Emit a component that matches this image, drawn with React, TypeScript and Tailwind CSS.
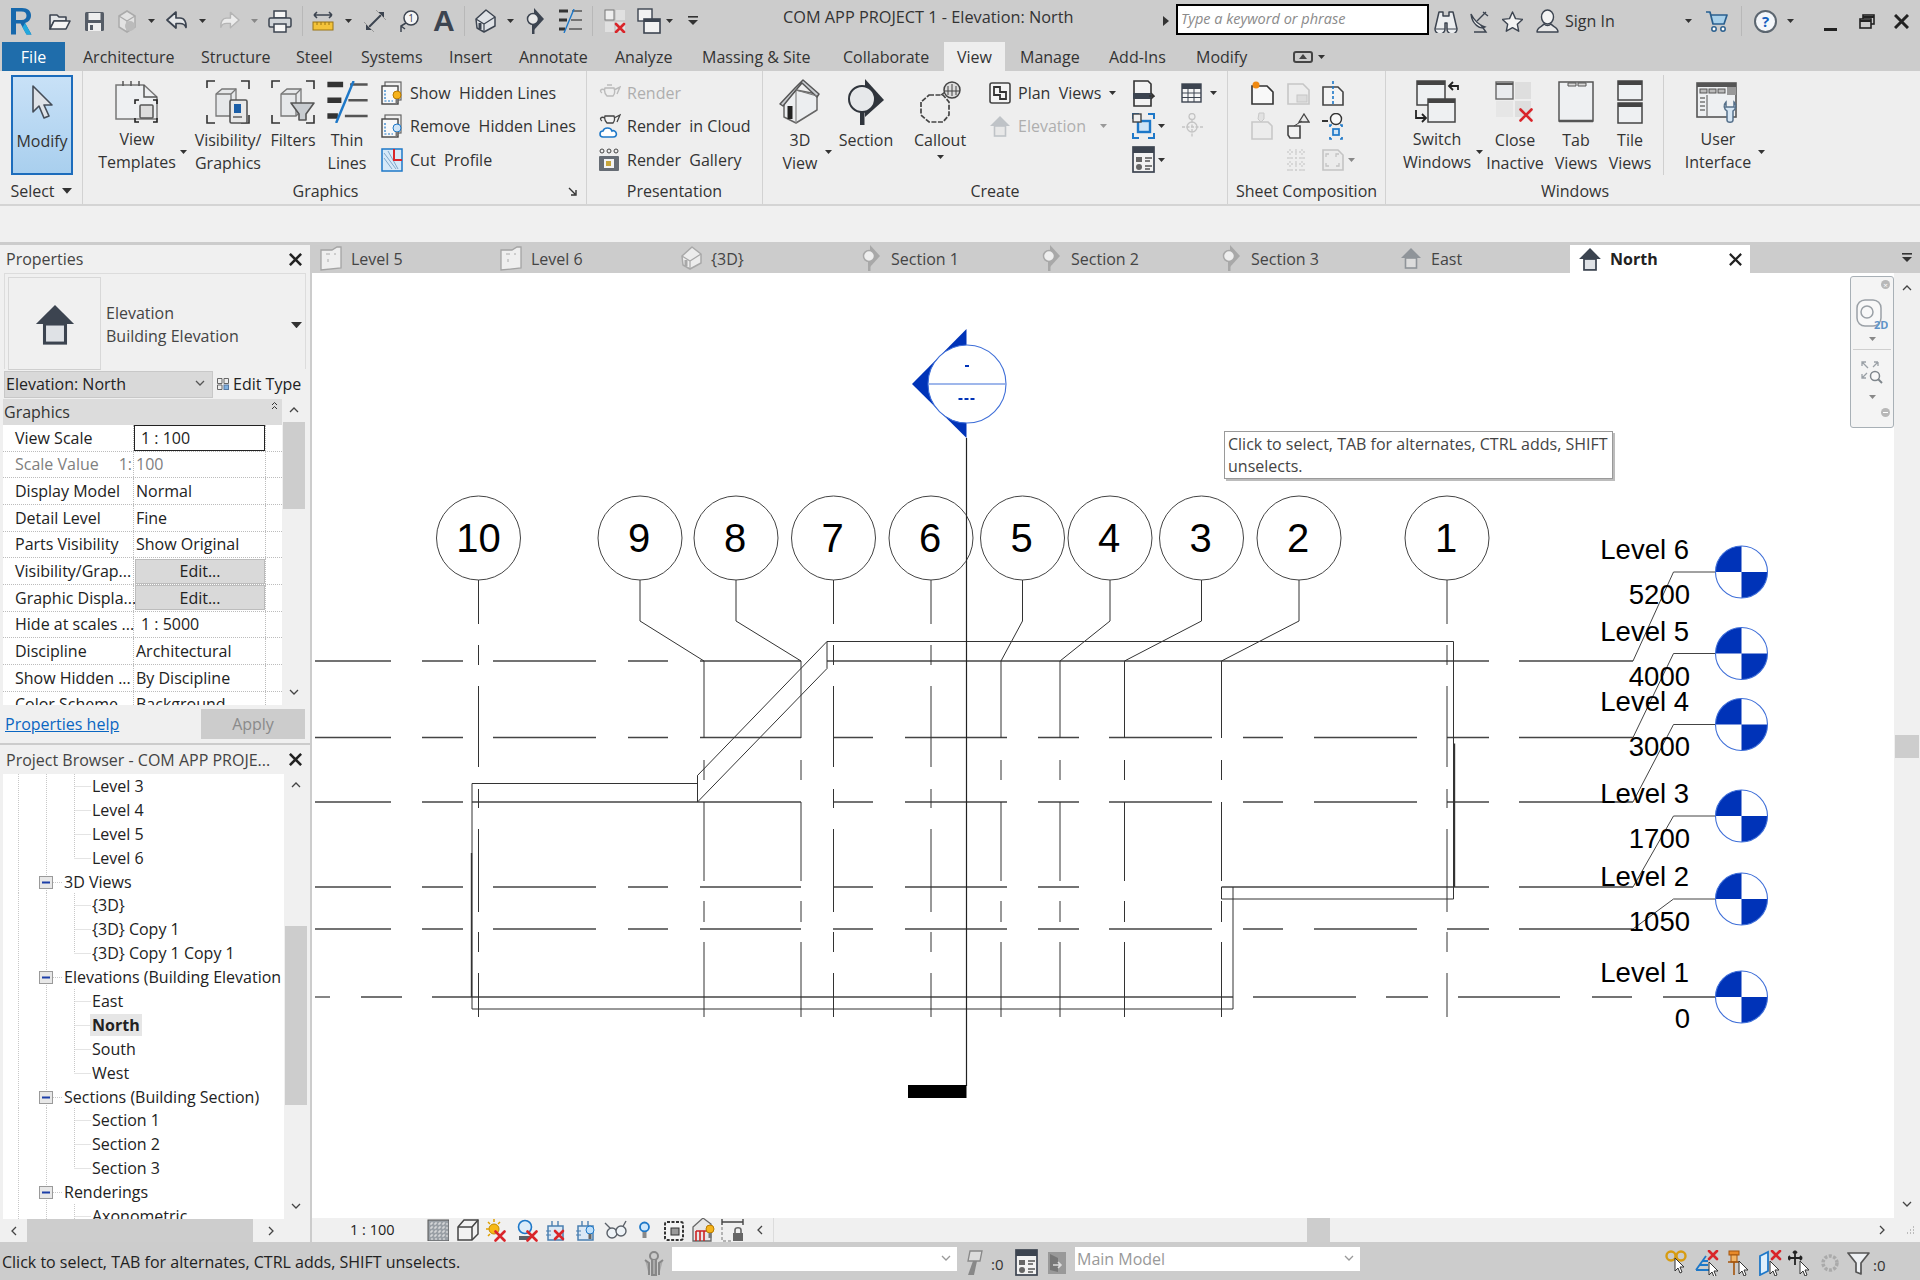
import React from "react";

type P = { children?: React.ReactNode };
const S = ({ w, h, children }: { w: number; h: number; children?: React.ReactNode }) => (
  <svg width={w} height={h} viewBox={`0 0 ${w} ${h}`} className="block shrink-0">{children}</svg>
);
const D = "#3c4450";
const G = "#e4e6e8";
const B = "#1e78c8";

const Caret = ({ c = "#333", w = 7 }: { c?: string; w?: number }) => (
  <svg width={w} height={(w * 4) / 7} viewBox="0 0 7 4" className="block shrink-0"><path d="M0 0h7L3.5 4z" fill={c} /></svg>
);
const Cross = ({ x, y, s = 5 }: { x: number; y: number; s?: number }) => (
  <path d={`M${x - s} ${y - s}L${x + s} ${y + s}M${x + s} ${y - s}L${x - s} ${y + s}`} stroke="#d9252a" strokeWidth="2.6" strokeLinecap="round" />
);

/* ---------- quick access ---------- */
const RLogo = () => (
  <S w={22} h={28}>
    <path fillRule="evenodd" d="M1 1h11c6 0 9 3 9 7.5 0 4-2.5 6.5-6 7.5l6.5 11.5h-5L10.5 16.5H6V27.5H1zM6 4.5v8.5h5.5c3.5 0 5-1.7 5-4.3S15 4.5 11.500 4.500z" fill="#1668ac" />
    <path d="M15 16l6.500 11.500h-5l-4-7z" fill="#23a8dd" />
  </S>
);
const OpenI = () => (
  <S w={23} h={20}>
    <path d="M2 4h7l2 2h7v4H6L2 18z" fill={G} stroke={D} strokeWidth="1.6" strokeLinejoin="round" />
    <path d="M6 10h16l-4 8H2z" fill="#f4f4f4" stroke={D} strokeWidth="1.6" strokeLinejoin="round" />
  </S>
);
const SaveI = () => (
  <S w={21} h={21}>
    <rect x="1" y="1" width="19" height="19" rx="1.5" fill="#555c66" />
    <rect x="4.5" y="2" width="12" height="7" fill="#eee" />
    <rect x="4" y="12" width="13" height="8" fill="#eee" />
    <rect x="6" y="14" width="3" height="5" fill="#555c66" />
  </S>
);
const SyncI = () => (
  <S w={25} h={24}>
    <path d="M4 7l8-5 8 5v11l-8 5-8-5z" fill="#e2e2e2" stroke="#aaa" strokeWidth="1.5" />
    <path d="M4 7l8 5 8-5M12 12v11" fill="none" stroke="#aaa" strokeWidth="1.2" />
    <circle cx="15" cy="17" r="5" fill="#bbb" />
  </S>
);
const UndoI = ({ c = D, f = G }: { c?: string; f?: string }) => (
  <S w={23} h={22}>
    <path d="M10 2L1 10l9 8v-4.5h4c3 0 5 1 6 4 .5-5-1.5-9.500-6-9.500h-4z" fill={f} stroke={c} strokeWidth="1.7" strokeLinejoin="round" />
  </S>
);
const RedoI = () => (
  <svg width="22" height="22" viewBox="0 0 23 22" className="block shrink-0 -scale-x-100">
    <path d="M10 2L1 10l9 8v-4.5h4c3 0 5 1 6 4 .5-5-1.5-9.500-6-9.500h-4z" fill="#ececec" stroke="#b5b5b5" strokeWidth="1.5" strokeLinejoin="round" />
  </svg>
);
const PrintI = () => (
  <S w={24} h={23}>
    <rect x="6" y="1" width="12" height="7" fill="#f6f6f6" stroke={D} strokeWidth="1.5" />
    <rect x="1" y="8" width="22" height="9" rx="1.5" fill="#d0d4d8" stroke={D} strokeWidth="1.5" />
    <rect x="6" y="14" width="12" height="8" fill="#f6f6f6" stroke={D} strokeWidth="1.5" />
  </S>
);
const Vsep = () => <div className="w-px h-[30px] bg-[#b8b8b8] shrink-0" />;
const MeasureI = () => (
  <S w={22} h={22}>
    <path d="M2 5h18M2 5l3-3M2 5l3 3M20 5l-3-3M20 5l-3 3" fill="none" stroke={D} strokeWidth="1.6" />
    <rect x="1" y="12" width="20" height="8" fill="#f3c33a" stroke="#9a7414" strokeWidth="1" />
    <path d="M5 12v3M9 12v3M13 12v3M17 12v3" stroke="#9a7414" />
  </S>
);
const AlignI = () => (
  <S w={24} h={24}>
    <path d="M5 19L19 5" stroke={D} strokeWidth="2" />
    <path d="M15 3l6 0 0 6zM3 15v6h6z" fill={D} />
    <path d="M1 13l10 10M13 1l10 10" stroke="#999" strokeWidth="1" />
  </S>
);
const TagI = () => (
  <S w={20} h={24}>
    <circle cx="12" cy="9" r="7" fill="#f5f5f5" stroke={D} strokeWidth="1.5" />
    <text x="12" y="13" textAnchor="middle" fontSize="10" fill={D}>1</text>
    <path d="M7 14L2 17v6M2 17l4 3" fill="none" stroke={D} strokeWidth="1.5" />
  </S>
);
const AI = () => (
  <div className="w-[18px] text-[30px] leading-none font-bold text-[#3c4450] font-['Liberation_Sans',sans-serif]">A</div>
);
const HouseSm = ({ c = D, f = "#dfe2e6" }: { c?: string; f?: string }) => (
  <S w={22} h={24}>
    <path d="M2 10L12 1l9 7v9l-11 6-7-4z" fill={f} stroke={c} strokeWidth="1.5" strokeLinejoin="round" />
    <path d="M2 10l8 5 11-7M10 15v8" fill="none" stroke={c} strokeWidth="1.2" />
    <rect x="4.500" y="14" width="3" height="6" fill={c} />
  </S>
);
const SecSm = ({ c = D, l = "#e8e8e8" }: { c?: string; l?: string }) => (
  <S w={19} h={26}>
    <path d="M8 0l10 11-10 11z" fill={c} />
    <circle cx="7" cy="11" r="5.500" fill={l} stroke={c} strokeWidth="1.5" />
    <rect x="6" y="17" width="2.5" height="9" fill={c} />
  </S>
);
const ThinSm = ({ w = 23, h = 24 }: { w?: number; h?: number }) => (
  <svg width={w} height={h} viewBox="0 0 23 24" className="block shrink-0">
    <path d="M0 2h9M0 11h8M0 20h6" stroke="#333" strokeWidth="3.2" />
    <path d="M13 2h10M12 11h11M10 20h13" stroke="#555" strokeWidth="1.4" />
    <path d="M15 0L5 24" stroke={B} strokeWidth="1.4" />
  </svg>
);
const CloseInSm = () => (
  <S w={22} h={24}>
    <rect x="1" y="1" width="9" height="10" fill="#eee" stroke="#777" />
    <rect x="12" y="1" width="9" height="10" fill="#e0e0e0" />
    <rect x="1" y="13" width="9" height="10" fill="#e0e0e0" />
    <rect x="12" y="13" width="9" height="10" fill="#e0e0e0" />
    <Cross x={16} y={19} s={4} />
  </S>
);
const SwitchSm = () => (
  <S w={24} h={26}>
    <rect x="1" y="1" width="14" height="12" fill="#f2f2f2" stroke={D} strokeWidth="1.4" />
    <rect x="7" y="11" width="16" height="14" fill="#f2f2f2" stroke={D} strokeWidth="1.6" />
    <rect x="7" y="11" width="16" height="3" fill={D} />
  </S>
);
const MoreI = () => (
  <S w={10} h={10}>
    <rect x="0" y="0" width="10" height="1.6" fill="#333" />
    <path d="M0 4h10L5 9z" fill="#333" />
  </S>
);

/* ---------- top right ---------- */
const BinocI = () => (
  <S w={24} h={23}>
    <path d="M5 2h4v4h6V2h4l4 17a4 4 0 0 1-10 0v-6h-2v6a4 4 0 0 1-10 0z" fill="#eceef0" stroke={D} strokeWidth="1.5" strokeLinejoin="round" />
    <path d="M2 19h9M13 19h9" stroke={D} strokeWidth="1.2" />
  </S>
);
const SatI = () => (
  <S w={19} h={24}>
    <path d="M1 5c3 6 8 11 14 13-5 3-13-3-14-13z" fill="#eee" stroke={D} strokeWidth="1.4" />
    <path d="M7 12l9-9M13 3l5 4M4 23h12l-5-7" fill="none" stroke={D} strokeWidth="1.4" />
  </S>
);
const StarI = () => (
  <S w={21} h={21}>
    <path d="M10.5 1l3 6.6 7 .8-5.2 4.8 1.4 7-6.2-3.6-6.2 3.6 1.4-7L.5 8.4l7-.8z" fill="#f3f3f3" stroke={D} strokeWidth="1.4" strokeLinejoin="round" />
  </S>
);
const UserI = () => (
  <S w={23} h={24}>
    <ellipse cx="11.5" cy="8" rx="6" ry="7" fill="#f4f4f4" stroke={D} strokeWidth="1.4" />
    <path d="M1 23c0-5 5-5 7-8 2 2 5 2 7 0 2 3 7 3 7 8z" fill="#e8e8e8" stroke={D} strokeWidth="1.4" strokeLinejoin="round" />
  </S>
);
const CartI = () => (
  <S w={23} h={21}>
    <path d="M1 1h4l3 12h11l3-9H6" fill="#a8d0ea" stroke="#2a5f8e" strokeWidth="1.7" strokeLinejoin="round" />
    <circle cx="9" cy="18" r="2.2" fill="#fff" stroke="#2a5f8e" strokeWidth="1.5" />
    <circle cx="18" cy="18" r="2.2" fill="#fff" stroke="#2a5f8e" strokeWidth="1.5" />
  </S>
);
const HelpI = () => (
  <div className="w-[23px] h-[23px] rounded-full border-2 border-[#5c6670] bg-[#f4f7fb] flex items-center justify-center text-[#1660c0] font-bold text-[15px] leading-none shrink-0">?</div>
);
const RestoreI = () => (
  <S w={16} h={15}>
    <rect x="4" y="1" width="11" height="9" fill="none" stroke="#222" strokeWidth="1.6" />
    <path d="M4 3h11" stroke="#222" strokeWidth="2" />
    <rect x="1" y="5" width="11" height="9" fill="#ccc" stroke="#222" strokeWidth="1.6" />
    <path d="M1 7h11" stroke="#222" strokeWidth="2" />
  </S>
);
const XI = ({ s = 15, w = 3 }: { s?: number; w?: number }) => (
  <svg width={s} height={s} viewBox="0 0 15 15" className="block shrink-0">
    <path d="M1 1l13 13M14 1L1 14" stroke="#222" strokeWidth={w} />
  </svg>
);

/* ---------- big ribbon icons ---------- */
const CursorBig = () => (
  <S w={24} h={36}>
    <path d="M3 1v26l6-6 5 12 5-2-5-11h8z" fill="#dfe3e8" stroke="#454d58" strokeWidth="1.6" strokeLinejoin="round" />
  </S>
);
const ViewTplI = () => (
  <S w={44} h={44}>
    <path d="M1 5h28l13 12v22H1z" fill="#eef0f2" stroke="#777" strokeWidth="1.5" />
    <path d="M8 1v5M16 1v5M24 1v5M29 5v12h13" fill="none" stroke="#555" strokeWidth="1.5" />
    <path d="M20 24v-4h4M38 20h4v4M42 38v4h-4M24 42h-4v-4" fill="none" stroke="#222" strokeWidth="1.6" />
    <rect x="25" y="25" width="13" height="13" rx="1" fill="#ddd" stroke="#555" strokeWidth="1.5" />
  </S>
);
const CubeFrame = ({ children }: P) => (
  <S w={44} h={44}>
    <path d="M1 8V1h8M35 1h8v8M1 35v8h8M35 43h8v-8" fill="none" stroke="#333" strokeWidth="1.6" />
    <path d="M10 14l6-5h14v22l-5 5H10z" fill="#e6e8ea" stroke="#777" strokeWidth="1.3" />
    <path d="M10 14h15v22M25 14l5-5" fill="none" stroke="#777" strokeWidth="1.3" />
    {children}
  </S>
);
const VisI = () => (
  <CubeFrame>
    <rect x="24" y="20" width="17" height="23" rx="1.5" fill="#e8e8e8" stroke="#555" strokeWidth="1.6" />
    <rect x="28" y="24" width="7" height="9" fill="#1c5fa8" />
    <path d="M27 37h9" stroke="#555" strokeWidth="1.4" />
  </CubeFrame>
);
const FiltersI = () => (
  <CubeFrame>
    <path d="M20 23h23l-8 11v6h-7v-6z" fill="#c8ccd0" stroke="#555" strokeWidth="1.6" strokeLinejoin="round" />
  </CubeFrame>
);
const ThinBig = () => <ThinSm w={43} h={42} />;

const SmDoc = ({ children }: P) => (
  <S w={22} h={24}>
    <rect x="4" y="1" width="16" height="18" fill="#f0f0f0" stroke="#666" strokeWidth="1.2" />
    <rect x="1" y="5" width="16" height="18" fill="#f8f8f8" stroke="#444" strokeWidth="1.4" />
    <path d="M4 9v11h8" fill="none" stroke={B} strokeWidth="1.2" strokeDasharray="2 1.5" />
    {children}
  </S>
);
const ShowI = () => (
  <SmDoc>
    <circle cx="16" cy="14" r="4" fill="#f6b21a" stroke="#b97b00" />
    <rect x="14.5" y="18" width="3" height="4" fill="#777" />
  </SmDoc>
);
const RemoveI = () => (
  <SmDoc>
    <circle cx="16" cy="14" r="4" fill="#cfe4f6" stroke={B} />
    <rect x="14.5" y="18" width="3" height="4" fill="#777" />
  </SmDoc>
);
const CutI = () => (
  <S w={22} h={24}>
    <rect x="1" y="1" width="20" height="22" fill="#d7e9f8" stroke={B} strokeWidth="1.5" />
    <path d="M3 5l12 16M3 10l8 11M7 3l10 18" stroke="#7fa8cc" />
    <path d="M13 1v11h8" fill="none" stroke="#d9252a" strokeWidth="2" />
  </S>
);
const TeapotI = ({ d = false }: { d?: boolean }) => (
  <S w={23} h={22}>
    <path d="M7 6h9c1 3 1 6-1 8H9C7 12 6 9 7 6zM16 8l6-3-3 7M7 8C3 6 1 9 4 11" fill={d ? "#eee" : "#f2f2f2"} stroke={d ? "#bbb" : "#444"} strokeWidth="1.4" />
    <path d="M9 3h5" stroke={d ? "#bbb" : "#444"} strokeWidth="1.5" />
  </S>
);
const CloudI = () => (
  <S w={23} h={26}>
    <path d="M7 3h9c1 3 1 5-1 7H9C7 8 6 6 7 3zM16 5l6-3-3 7M7 5C3 3 1 6 4 8" fill="#f2f2f2" stroke="#444" strokeWidth="1.3" />
    <path d="M5 24c-4 0-4-6 0-6 1-4 8-4 9 0 4-2 7 6 1 6z" fill="#fff" stroke={B} strokeWidth="1.6" />
  </S>
);
const GalleryI = () => (
  <S w={22} h={24}>
    <circle cx="4" cy="3" r="2" fill="none" stroke="#444" />
    <circle cx="11" cy="3" r="2" fill="none" stroke="#444" />
    <circle cx="18" cy="3" r="2" fill="none" stroke="#444" />
    <rect x="1" y="8" width="20" height="15" rx="1" fill="#666c74" />
    <rect x="6" y="11" width="10" height="9" fill="#f3f3f3" />
    <rect x="8" y="13" width="5" height="5" fill="#c7a53a" />
  </S>
);
const House3D = () => (
  <S w={42} h={46}>
    <path d="M5 24L17 11l21 4v16L17 44 5 38z" fill="#eceef0" stroke="#666" strokeWidth="1.5" strokeLinejoin="round" />
    <path d="M17 11v33" stroke="#888" strokeWidth="1.2" />
    <path d="M1 25L16 9 24 1l16 14-2 3L23 4 17 11 4 27z" fill="#c9ccd0" stroke="#555" strokeWidth="1.5" strokeLinejoin="round" />
    <path d="M17 11l21 6" stroke="#777" strokeWidth="1.2" />
    <rect x="8.500" y="27" width="5" height="13" fill="#222" />
  </S>
);
const SectionBig = () => (
  <S w={38} h={46}>
    <path d="M18 0l19 21-19 17z" fill="#30353c" />
    <circle cx="15" cy="20" r="13" fill="#e6e8ea" stroke="#30353c" strokeWidth="2" />
    <rect x="13" y="33" width="4.5" height="13" fill="#30353c" />
  </S>
);
const CalloutBig = () => (
  <S w={42} h={42}>
    <path d="M10 14h14l6 7v13l-6 7H10l-8-7V21z" fill="none" stroke="#444" strokeWidth="1.7" strokeDasharray="5 1.500" />
    <path d="M22 14l8-6" stroke="#444" strokeWidth="1.4" />
    <circle cx="33" cy="9" r="8" fill="#ddd" stroke="#444" strokeWidth="1.5" />
    <path d="M25 10h16M29 5v9M33 3v12M37 5v9" stroke="#444" />
  </S>
);
const PlanI = () => (
  <S w={22} h={24}>
    <rect x="1" y="2" width="20" height="20" rx="2" fill="#f4f4f4" stroke="#444" strokeWidth="1.6" />
    <path d="M5 6h6v5h6v7h-6v-4H5z" fill="none" stroke="#333" strokeWidth="1.8" />
  </S>
);
const ElevI = ({ c = "#bfc3c7", f = "#e8e8e8", s = 22 }: { c?: string; f?: string; s?: number }) => (
  <svg width={s} height={s} viewBox="0 0 22 22" className="block shrink-0">
    <path d="M11 1L1 11h20z" fill={c} />
    <rect x="5.5" y="11" width="11" height="10" fill={f} stroke={c} strokeWidth="1.6" />
  </svg>
);
const PrintSheetI = () => (
  <S w={23} h={28}>
    <path d="M2 2h14l3 3v22H2z" fill="#f3f3f3" stroke="#333" strokeWidth="1.6" />
    <rect x="1" y="14" width="18" height="6" fill="#3c4450" />
    <path d="M17 17h5l-3-3M22 17l-3 3" fill="none" stroke="#333" strokeWidth="1.5" />
  </S>
);
const ScopeI = () => (
  <S w={23} h={26}>
    <path d="M1 6V1h6M16 1h6v5M1 20v5h6M16 25h6v-5" fill="none" stroke={B} strokeWidth="2" />
    <rect x="6" y="8" width="12" height="11" fill="#cfe4f6" stroke={B} strokeWidth="2.4" />
    <rect x="1" y="1" width="8" height="8" fill="#eee" stroke="#444" strokeWidth="1.4" />
  </S>
);
const LegendI = () => (
  <S w={23} h={27}>
    <rect x="1" y="1" width="21" height="25" fill="#f2f2f2" stroke="#3c4450" strokeWidth="1.7" />
    <rect x="1" y="1" width="21" height="6" fill="#3c4450" />
    <rect x="4" y="11" width="6" height="5" fill="#666" />
    <circle cx="7" cy="21" r="3" fill="#666" />
    <path d="M13 12h7M13 15h5M13 20h7M13 23h5" stroke="#555" strokeWidth="1.3" />
  </S>
);
const TableI = () => (
  <S w={21} h={20}>
    <rect x="1" y="1" width="19" height="18" fill="#f6f6f6" stroke="#3c4450" strokeWidth="1.4" />
    <rect x="1" y="1" width="19" height="5" fill="#3c4450" />
    <path d="M1 10h19M1 14.500h19M7 6v13M13 6v13" stroke="#3c4450" />
  </S>
);
const GuideI = () => (
  <S w={23} h={26}>
    <circle cx="11" cy="3.500" r="3" fill="none" stroke="#c4c4c4" strokeWidth="1.3" />
    <path d="M11 7v18M1 14h21" stroke="#c4c4c4" strokeWidth="1.3" strokeDasharray="3 1.5" />
    <circle cx="11" cy="14" r="5" fill="none" stroke="#c4c4c4" strokeWidth="1.3" />
  </S>
);
const NewSheetI = () => (
  <S w={24} h={24}>
    <path d="M2 5h15l6 6v12H2z" fill="#f8f8f8" stroke="#333" strokeWidth="1.6" />
    <circle cx="6" cy="4" r="3.500" fill="#f08a12" />
  </S>
);
const GhostSheetI = () => (
  <S w={24} h={24}>
    <path d="M2 3h15l6 6v14H2z" fill="#ededed" stroke="#c6c6c6" strokeWidth="1.6" />
    <rect x="11" y="14" width="10" height="7" fill="#dcdcdc" stroke="#c6c6c6" />
  </S>
);
const RevI = () => (
  <S w={24} h={26}>
    <path d="M2 7h15l5 5v13H2z" fill="#f4f4f4" stroke="#444" strokeWidth="1.6" />
    <path d="M12 1v25" stroke={B} strokeWidth="1.6" strokeDasharray="3 2" />
  </S>
);
const GhostMatchI = () => (
  <S w={24} h={28}>
    <path d="M2 10h16l4 4v13H2z" fill="#ececec" stroke="#c8c8c8" strokeWidth="1.6" />
    <path d="M9 1h5v6l-3 3-3-3z" fill="#e2e2e2" stroke="#c8c8c8" />
  </S>
);
const AlignSheetI = () => (
  <S w={24} h={26}>
    <path d="M2 13h12v12H4l-2-3z" fill="#f1f1f1" stroke="#444" strokeWidth="1.6" />
    <path d="M18 1l5 8h-10z" fill="#e9e9e9" stroke="#444" strokeWidth="1.3" />
    <path d="M8 13l8-5" stroke="#444" />
  </S>
);
const TagSheetI = () => (
  <S w={24} h={27}>
    <circle cx="15" cy="6" r="5.500" fill="#f8f8f8" stroke="#333" strokeWidth="1.4" />
    <path d="M1 8h6" stroke="#333" strokeWidth="2" />
    <path d="M9 14v-2h2M19 12h2v2M21 24v2h-2M11 26H9v-2" fill="none" stroke={B} strokeWidth="1.7" />
    <rect x="12" y="16" width="6" height="6" fill="#cfe4f6" stroke={B} strokeWidth="1.7" />
  </S>
);
const DotsI = () => (
  <S w={22} h={24}>
    <path d="M1 4h20M1 10h20M1 16h20M1 22h20M4 1v23M10 1v23M16 1v23" stroke="#cfcfcf" strokeWidth="1.3" strokeDasharray="2 2" />
  </S>
);
const GhostViewI = () => (
  <S w={24} h={24}>
    <path d="M2 2h15l5 5v15H2z" fill="#ebebeb" stroke="#c4c4c4" strokeWidth="1.6" />
    <path d="M5 9V6h3M15 9V6h3M5 15v3h3M15 18h3v-3" fill="none" stroke="#c4c4c4" strokeWidth="1.3" />
  </S>
);
const WinBar = ({ x, y, w, h }: { x: number; y: number; w: number; h: number }) => (
  <g>
    <rect x={x} y={y} width={w} height={h} fill="#eef0f2" stroke="#444" strokeWidth="1.5" />
    <rect x={x} y={y} width={w} height="4" fill="#444" />
  </g>
);
const SwitchBig = () => (
  <S w={44} h={44}>
    <WinBar x={2} y={1} w={28} h={24} />
    <WinBar x={13} y={19} w={27} h={23} />
    <path d="M43 10V6h-8M38 2l-4 4 4 4" fill="none" stroke="#222" strokeWidth="1.8" />
    <path d="M1 30v8h9M7 34l4 4-4 4" fill="none" stroke="#222" strokeWidth="1.8" />
  </S>
);
const CloseBig = () => (
  <S w={40} h={42}>
    <rect x="1" y="1" width="17" height="17" fill="#e9ebee" stroke="#666" strokeWidth="1.4" />
    <path d="M1 3h17" stroke="#555" strokeWidth="2" />
    <rect x="20" y="1" width="16" height="17" fill="#dedede" />
    <rect x="1" y="20" width="17" height="16" fill="#e6e6e6" />
    <rect x="20" y="20" width="16" height="16" fill="#dedede" />
    <Cross x={31} y={34} s={5.500} />
  </S>
);
const TabBig = () => (
  <S w={36} h={42}>
    <rect x="1" y="1" width="34" height="39" fill="#eef0f2" stroke="#555" strokeWidth="1.5" />
    <path d="M10 2h8v3h-8zM20 2h8v3h-8z" fill="#d8d8d8" stroke="#555" />
    <path d="M1 40h34" stroke="#555" strokeWidth="2.4" />
  </S>
);
const TileBig = () => (
  <S w={26} h={44}>
    <WinBar x={1} y={1} w={24} h={19} />
    <WinBar x={1} y={23} w={24} h={20} />
  </S>
);
const UIBig = () => (
  <S w={44} h={42}>
    <rect x="1" y="2" width="39" height="34" fill="#eef0f2" stroke="#555" strokeWidth="1.6" />
    <rect x="1" y="2" width="39" height="4" fill="#555" />
    <rect x="4" y="8" width="7" height="4" fill="#bbb" stroke="#555" />
    <rect x="13" y="8" width="7" height="4" fill="#bbb" stroke="#555" />
    <rect x="22" y="8" width="7" height="4" fill="#bbb" stroke="#555" />
    <rect x="31" y="6" width="9" height="8" fill="#999" />
    <path d="M4 17h5M4 21h5M4 25h5M4 29h5M11 14v22" stroke="#777" strokeWidth="1.3" />
    <path d="M31 30v9c0 3 6 3 6 0v-9c3-2 4-6 1-9v5h-8v-5c-3 3-2 7 1 9z" fill="#d6e6f4" stroke="#56708a" strokeWidth="1.5" />
  </S>
);

/* ---------- small view tab icons ---------- */
const LevelTabI = () => (
  <S w={22} h={25}>
    <path d="M1 4h11l5-3h4v21l-20 2z" fill="#efefef" stroke="#a4a4a4" strokeWidth="1.3" />
    <path d="M6 8h4M14 8h2M8 13v3" stroke="#aaa" />
  </S>
);

/* ---------- status icons ---------- */
const DetailI = () => (
  <S w={22} h={22}>
    <rect x="1" y="1" width="21" height="21" fill="#9aa0a6" stroke="#555" />
    <path d="M3 5h18M3 9h18M3 13h18M3 17h18M5 3v18M9 3v18M13 3v18M17 3v18" stroke="#e8e8e8" strokeDasharray="2 2" />
  </S>
);
const CubeI = () => (
  <S w={22} h={22}>
    <path d="M1 8l6-7h14v14l-6 6H1z" fill="#f2f2f2" stroke="#444" strokeWidth="1.5" />
    <path d="M1 8h14v13M15 8l6-7" fill="none" stroke="#444" strokeWidth="1.5" />
  </S>
);
const SunI = () => (
  <S w={22} h={24}>
    <circle cx="9" cy="11" r="5" fill="#f7b917" stroke="#c48a00" />
    <path d="M9 1v3M1 11h3M3 4l2 2M15 4l-2 2M3 18l2-2" stroke="#e0a000" strokeWidth="1.5" />
    <Cross x={15} y={18} s={4.500} />
  </S>
);
const ShadowI = () => (
  <S w={21} h={24}>
    <circle cx="8" cy="9" r="6.500" fill="#dcecf9" stroke={B} strokeWidth="1.6" />
    <rect x="2" y="18" width="11" height="4" fill="#5a6068" />
    <Cross x={15} y={18} s={4.500} />
  </S>
);
const CropI = ({ kind }: { kind: number }) => (
  <S w={22} h={24}>
    <path d="M3 8h15v14H3z" fill="#dbe9f6" stroke="#4a7fb0" strokeWidth="1.5" />
    <path d="M7 3v5M13 3v5" stroke="#4a7fb0" strokeWidth="1.4" />
    <path d="M1 13h5M1 17h5" stroke="#4a7fb0" />
    {kind === 0 ? <Cross x={14} y={17} s={4} /> : <g><circle cx="15" cy="12" r="4" fill="#bfe0fb" stroke={B} /><rect x="13.500" y="16" width="3" height="5" fill="#666" /></g>}
  </S>
);
const GlassesI = () => (
  <S w={23} h={22}>
    <path d="M1 4l7 7M22 2l-5 9" stroke="#5a6068" strokeWidth="1.4" />
    <circle cx="8" cy="14" r="5" fill="#eef3f7" stroke="#5a6068" strokeWidth="1.4" />
    <circle cx="17" cy="12" r="5" fill="#eef3f7" stroke="#5a6068" strokeWidth="1.4" />
  </S>
);
const BulbI = () => (
  <S w={11} h={20}>
    <circle cx="5.500" cy="7" r="4.500" fill="#cfe7fb" stroke={B} strokeWidth="1.8" />
    <rect x="3.500" y="12" width="4" height="6" fill="#888" />
  </S>
);
const CamI = () => (
  <S w={21} h={24}>
    <rect x="2" y="4" width="18" height="18" rx="2" fill="#f4f4f4" stroke="#333" strokeWidth="2" strokeDasharray="3 1.5" />
    <rect x="8" y="10" width="8" height="7" fill="#999" stroke="#333" />
  </S>
);
const TempI = () => (
  <S w={23} h={26}>
    <path d="M1 10l10-9 8 6v17H1z" fill="#e7e7e7" stroke="#666" strokeWidth="1.3" />
    <path d="M4 14h11M4 14v10M8 14v10M12 14v10" stroke="#c22" strokeWidth="1.6" />
    <circle cx="18" cy="12" r="4" fill="#f5b41b" stroke="#b97b00" />
    <rect x="16.500" y="16" width="3" height="5" fill="#777" />
  </S>
);
const LockDimI = () => (
  <S w={23} h={24}>
    <path d="M1 1v6M22 1v6M1 4h21" stroke="#444" strokeWidth="1.4" />
    <path d="M1 9v14h10" fill="none" stroke="#777" strokeDasharray="3 2" />
    <rect x="12" y="15" width="10" height="8" fill="#666" />
    <path d="M14 15v-3c0-3 6-3 6 0v3" fill="none" stroke="#666" strokeWidth="1.6" />
  </S>
);
const WorkI = () => (
  <S w={20} h={26}>
    <circle cx="10" cy="6" r="4" fill="none" stroke="#888" strokeWidth="2" />
    <path d="M1 10l4 3v12M19 10l-4 3v12M8 10v15h4V10" fill="#aaa" stroke="#888" strokeWidth="2" />
  </S>
);
const DesignI = () => (
  <S w={19} h={26}>
    <path d="M6 1h12l-2 10H4z" fill="#ddd" stroke="#888" strokeWidth="1.3" />
    <path d="M9 11l-5 14h6l3-14z" fill="#888" />
  </S>
);
const ModelI = () => (
  <S w={20} h={24}>
    <rect x="1" y="1" width="18" height="22" fill="#999" />
    <path d="M3 3l8 4v14l-8-2z" fill="#777" />
    <path d="M6 14h8M11 11l3 3-3 3" fill="none" stroke="#ddd" strokeWidth="1.6" />
  </S>
);
const Arrow = ({ x = 14, y = 12 }: { x?: number; y?: number }) => (
  <path d={`M${x} ${y}v13l3-3 2 5 2-1-2-5h4z`} fill="#fff" stroke="#333" strokeWidth="1" />
);
const LinkSel = () => (
  <S w={22} h={26}>
    <circle cx="6" cy="6" r="4.500" fill="none" stroke="#d79c12" strokeWidth="2.4" />
    <circle cx="16" cy="6" r="4.500" fill="none" stroke="#d79c12" strokeWidth="2.4" />
    <Arrow x={10} y={8} />
  </S>
);
const UnderlaySel = () => (
  <S w={25} h={26}>
    <path d="M1 20l10-14M1 20h14M5 15h8M7 11h6" fill="none" stroke={B} strokeWidth="1.8" />
    <Cross x={18} y={5} s={4} />
    <Arrow x={14} y={12} />
  </S>
);
const PinSel = () => (
  <S w={23} h={26}>
    <rect x="2" y="1" width="10" height="4" fill="#e88a2a" stroke="#a4540c" />
    <rect x="4" y="5" width="6" height="7" fill="#f3b566" stroke="#a4540c" />
    <path d="M1 12h12M7 12v13" stroke="#a4540c" strokeWidth="1.6" />
    <Arrow x={12} y={11} />
  </S>
);
const FaceSel = () => (
  <S w={24} h={26}>
    <path d="M2 6l8-4v19l-8 4z" fill="#dfeffb" stroke={B} strokeWidth="1.8" />
    <Cross x={18} y={5} s={4} />
    <Arrow x={12} y={11} />
  </S>
);
const DragSel = () => (
  <S w={23} h={26}>
    <path d="M7 1v14M0 8h14M7 1L5 3M7 1l2 2M0 8l2-2M0 8l2 2M14 8l-2-2M14 8l-2 2" stroke="#222" strokeWidth="1.8" fill="none" />
    <Arrow x={12} y={11} />
  </S>
);
const Spin = () => (
  <S w={18} h={20}>
    <circle cx="9" cy="10" r="7" fill="none" stroke="#aaa" strokeWidth="3.500" strokeDasharray="3 1.5" />
  </S>
);
const FunnelI = () => (
  <S w={23} h={24}>
    <path d="M1 2h21l-8 10v11l-5-2v-9z" fill="#eef1f4" stroke="#555" strokeWidth="1.7" strokeLinejoin="round" />
  </S>
);

/* ---------- composite pieces ---------- */
const Big = ({ icon, lines, cls, high }: { icon: React.ReactNode; lines: string[]; cls: string; high?: boolean }) => (
  <div className={`flex flex-col items-center shrink-0 ${cls}`}>
    <div className="h-[58px] pt-[4px] flex items-center justify-center">{icon}</div>
    <div className={`text-center leading-[23px] ${high ? "-mt-[1px]" : ""}`}>
      {lines.map((l) => (
        <div key={l} className="whitespace-nowrap">{l}</div>
      ))}
    </div>
  </div>
);
const Row = ({ icon, text, dim }: { icon: React.ReactNode; text: string; dim?: boolean }) => (
  <div className={`h-[33.5px] flex items-center whitespace-pre ${dim ? "text-[#aeaeae]" : ""}`}>
    <div className="w-[22px] flex justify-center shrink-0">{icon}</div>
    <span className="ml-[7px]">{text}</span>
  </div>
);
const Panel = ({ cls, label, children, launcher }: { cls: string; label: React.ReactNode; children: React.ReactNode; launcher?: boolean }) => (
  <div className={`flex flex-col shrink-0 border-r border-[#d2d2d2] ${cls}`}>
    <div className="h-[108px] flex">{children}</div>
    <div className="h-[24px] flex items-center">
      <div className="flex-1 text-center">{label}</div>
      {launcher && (
        <div className="w-[18px] pr-[5px]">
          <svg width="9" height="9" viewBox="0 0 9 9" className="block"><path d="M1 1l6 6M8 3v5H3" fill="none" stroke="#333" strokeWidth="1.4" /></svg>
        </div>
      )}
    </div>
  </div>
);

/* ---------- drawing ---------- */
const baseH: number[][] = [[315, 391], [422, 463], [493, 596], [628, 668], [700, 801], [833, 873], [905, 1007], [1038, 1079], [1109, 1212], [1243, 1283], [1314, 1417], [1447, 1489], [1519, 1633]];
const levels: { y: number; segs: number[][] }[] = [
  { y: 661, segs: [[315, 391], [422, 463], [493, 596], [628, 668], [700, 801], [827, 1489], [1519, 1633]] },
  { y: 737.5, segs: baseH },
  { y: 802, segs: [[315, 391], [422, 463], [472, 801], ...baseH.slice(5)] },
  { y: 887, segs: [...baseH.slice(0, 8), [1221.5, 1489], [1519, 1633]] },
  { y: 929, segs: baseH },
  { y: 997, segs: [[315, 330], [361, 402], [432, 1233], [1253, 1356], [1386, 1428], [1458, 1560], [1592, 1632], [1663, 1715]] },
];
const grids: { n: string; cx: number; x?: number }[] = [
  { n: "10", cx: 478.5 },
  { n: "9", cx: 640, x: 704 },
  { n: "8", cx: 736, x: 801 },
  { n: "7", cx: 833.5 },
  { n: "6", cx: 931 },
  { n: "5", cx: 1022.5, x: 1001 },
  { n: "4", cx: 1110, x: 1060 },
  { n: "3", cx: 1201.5, x: 1124.5 },
  { n: "2", cx: 1299, x: 1221.5 },
  { n: "1", cx: 1447 },
];
const straightDash = [[580, 624], [645, 665], [686, 767], [789, 808], [829, 912], [932, 952], [973, 1017]];
const elbowDash = [[661, 738], [760, 780], [802, 881], [901, 922], [942, 1017]];
const heads: { name: string; val: string; cy: number; ny: number; vy: number; to?: number }[] = [
  { name: "Level 6", val: "5200", cy: 572, ny: 559, vy: 603.5, to: 661 },
  { name: "Level 5", val: "4000", cy: 653.5, ny: 641, vy: 686, to: 737.5 },
  { name: "Level 4", val: "3000", cy: 724.5, ny: 711, vy: 756, to: 802 },
  { name: "Level 3", val: "1700", cy: 816, ny: 803, vy: 848, to: 887 },
  { name: "Level 2", val: "1050", cy: 899, ny: 886, vy: 931, to: 929 },
  { name: "Level 1", val: "0", cy: 997, ny: 982, vy: 1028 },
];
const LC = "#333";
const Drawing = () => (
  <svg width="1582" height="945" viewBox="312 273 1582 945" className="block font-['Liberation_Sans',sans-serif]" fill="none">
    {levels.map((l) => l.segs.map(([a, b]) => <line key={`${l.y}-${a}`} x1={a} x2={b} y1={l.y} y2={l.y} stroke="#444" strokeWidth="1.3" />))}
    {grids.map((g) => {
      const gx = g.x;
      return (
        <g key={g.n} stroke={LC} strokeWidth="1">
          {gx === undefined
            ? straightDash.map(([a, b]) => <line key={a} x1={g.cx} x2={g.cx} y1={a} y2={b} />)
            : (
              <>
                <path d={`M${g.cx} 580V621L${gx} 661`} />
                {elbowDash.map(([a, b]) => <line key={a} x1={gx} x2={gx} y1={a} y2={b} />)}
              </>
            )}
          <circle cx={g.cx} cy={538} r={42} fill="#fff" stroke="#444" />
          <text x={g.cx - (g.n === "10" ? 0 : 1)} y={551.5} textAnchor="middle" fontSize="40" fill="#000" stroke="none">{g.n}</text>
        </g>
      );
    })}
    {/* building */}
    <g stroke="#333" strokeWidth="1">
      <path d="M827 641.500H1453.500V899H1221.500V887" />
      <path d="M827 641.500V668.500L697.500 802V775.500L827 641.500" />
      <path d="M697.500 775.500V783.500H472V1009H1233V887" />
      <path d="M1454.500 743.500V887" strokeWidth="1.400" />
      <path d="M471.500 853V997" strokeWidth="1.400" />
    </g>
    {/* section */}
    <line x1="966.500" x2="966.500" y1="438" y2="1086" stroke="#222" strokeWidth="1.200" />
    <path d="M912 384L966.500 329V438z" fill="#0033b8" />
    <circle cx="967" cy="384" r="39" fill="#fff" stroke="#3f6fd8" strokeWidth="1.100" />
    <line x1="928" x2="1006" y1="384" y2="384" stroke="#7f9fe4" strokeWidth="1.500" />
    <rect x="965" y="365" width="4" height="2" fill="#0033b8" />
    <path d="M958.500 399h4M964.500 399h4M970.500 399h4" stroke="#0033b8" strokeWidth="1.800" />
    <rect x="908" y="1085" width="58.500" height="13" fill="#000" />
    {/* level heads */}
    {heads.map((h) => (
      <g key={h.name}>
        {h.to !== undefined && <path d={`M1715 ${h.cy}H1673.500L1633 ${h.to}`} stroke="#444" strokeWidth="1" />}
        <circle cx="1741.500" cy={h.cy} r="26" fill="#fff" />
        <path d={`M1741.500 ${h.cy}V${h.cy - 26}A26 26 0 0 0 1715.500 ${h.cy}zM1741.500 ${h.cy}V${h.cy + 26}A26 26 0 0 0 1767.500 ${h.cy}z`} fill="#0033b8" />
        <circle cx="1741.500" cy={h.cy} r="26" stroke="#3f6fd8" strokeWidth="1.100" />
        <text x="1689" y={h.ny} textAnchor="end" fontSize="27.500" fill="#000">{h.name}</text>
        <text x="1690" y={h.vy} textAnchor="end" fontSize="27.500" fill="#000">{h.val}</text>
      </g>
    ))}
  </svg>
);

const NavBar = () => (
  <div className="absolute right-0 top-[3px] w-[44px] h-[152px] bg-[#f4f4f4] border border-[#a8b0b6] rounded-[3px] flex flex-col items-center">
    <div className="self-end mr-[3px] mt-[3px] w-[9px] h-[9px] rounded-full bg-[#b8b8b8] flex items-center justify-center text-white text-[8px] leading-none">×</div>
    <div className="mt-[10px] relative">
      <S w={32} h={32}>
        <rect x="1" y="1" width="24" height="26" rx="8" fill="#f8f8f8" stroke="#9aa0a6" strokeWidth="1.5" />
        <circle cx="11" cy="13" r="6" fill="none" stroke="#9aa0a6" strokeWidth="1.5" />
        <text x="18" y="30" fontSize="11" fill="#5f94c8" fontWeight="700">2D</text>
      </S>
    </div>
    <div className="mt-[6px]"><Caret c="#888" /></div>
    <div className="mt-[8px] w-[38px] border-t border-[#cfcfcf]" />
    <div className="mt-[10px]">
      <S w={24} h={24}>
        <path d="M2 6V2h4M2 2l6 6M14 2h4M18 2v4M18 2l-5 5M2 14v4h4M2 18l5-5" fill="none" stroke="#9aa0a6" strokeWidth="1.300" />
        <circle cx="15" cy="16" r="4.500" fill="#f8f8f8" stroke="#7f868c" strokeWidth="1.500" />
        <path d="M18 19l4 4" stroke="#7f868c" strokeWidth="2" />
      </S>
    </div>
    <div className="mt-[11px]"><Caret c="#888" /></div>
    <div className="self-end mr-[3px] mt-[9px] w-[9px] h-[9px] rounded-full bg-[#b8b8b8] flex items-center justify-center"><div className="w-[5px] h-[1px] bg-white" /></div>
  </div>
);

const Chev = ({ d, c = "#444" }: { d: "u" | "d" | "l" | "r"; c?: string }) => {
  const p = { u: "M1 6l4-4 4 4", d: "M1 2l4 4 4-4", l: "M6 1L2 5l4 4", r: "M2 1l4 4-4 4" }[d];
  return (
    <svg width="10" height="10" viewBox="0 0 10 10" className="block shrink-0"><path d={p} fill="none" stroke={c} strokeWidth="1.300" /></svg>
  );
};

type TreeKind = "leaf" | "last" | "group";
const tree: { t: string; k: TreeKind; b?: boolean }[] = [
  { t: "Level 3", k: "leaf" },
  { t: "Level 4", k: "leaf" },
  { t: "Level 5", k: "leaf" },
  { t: "Level 6", k: "last" },
  { t: "3D Views", k: "group" },
  { t: "{3D}", k: "leaf" },
  { t: "{3D} Copy 1", k: "leaf" },
  { t: "{3D} Copy 1 Copy 1", k: "last" },
  { t: "Elevations (Building Elevation", k: "group" },
  { t: "East", k: "leaf" },
  { t: "North", k: "leaf", b: true },
  { t: "South", k: "leaf" },
  { t: "West", k: "last" },
  { t: "Sections (Building Section)", k: "group" },
  { t: "Section 1", k: "leaf" },
  { t: "Section 2", k: "leaf" },
  { t: "Section 3", k: "last" },
  { t: "Renderings", k: "group" },
  { t: "Axonometric", k: "leaf" },
];
const Guide = ({ k }: { k: TreeKind }) => (
  <svg width={k === "group" ? 61 : 89} height="24" viewBox={`0 0 ${k === "group" ? 61 : 89} 24`} className="block shrink-0">
    <g stroke="#c8c8c8" strokeDasharray="1 1">
      <line x1="15.500" x2="15.500" y1="0" y2="24" />
      {k === "group" ? (
        <>
          <line x1="43.500" x2="43.500" y1="0" y2="24" />
          <line x1="50" x2="60" y1="12.500" y2="12.500" />
        </>
      ) : (
        <>
          <line x1="43.500" x2="43.500" y1="0" y2="24" />
          <line x1="71.500" x2="71.500" y1="0" y2={k === "last" ? 12 : 24} />
          <line x1="71.500" x2="88" y1="12.500" y2="12.500" />
        </>
      )}
    </g>
    {k === "group" && (
      <g>
        <rect x="36.500" y="6.500" width="13" height="12" fill="#e8e8e8" stroke="#9a9a9a" />
        <line x1="39" x2="47" y1="12.500" y2="12.500" stroke="#1c3fa8" strokeWidth="2" />
      </g>
    )}
  </svg>
);

const props: { a: string; b: React.ReactNode; k?: "input" | "dim" | "btn" | "ind" }[] = [
  { a: "View Scale", b: "1 : 100", k: "input" },
  { a: "Scale Value", b: "1:", k: "dim" },
  { a: "Display Model", b: "Normal" },
  { a: "Detail Level", b: "Fine" },
  { a: "Parts Visibility", b: "Show Original" },
  { a: "Visibility/Grap...", b: "Edit...", k: "btn" },
  { a: "Graphic Displa...", b: "Edit...", k: "btn" },
  { a: "Hide at scales ...", b: "1 : 5000", k: "ind" },
  { a: "Discipline", b: "Architectural" },
  { a: "Show Hidden ...", b: "By Discipline" },
  { a: "Color Scheme", b: "Background" },
];

const viewTabs: { t: string; i: React.ReactNode; cls: string }[] = [
  { t: "Level 5", i: <LevelTabI />, cls: "w-[178px] pl-[8px]" },
  { t: "Level 6", i: <LevelTabI />, cls: "w-[180px] pl-[10px]" },
  { t: "{3D}", i: <HouseSm c="#a8a8a8" f="#ececec" />, cls: "w-[180px] pl-[10px]" },
  { t: "Section 1", i: <SecSm c="#a8a8a8" l="#eeeeee" />, cls: "w-[180px] pl-[10px]" },
  { t: "Section 2", i: <SecSm c="#a8a8a8" l="#eeeeee" />, cls: "w-[180px] pl-[10px]" },
  { t: "Section 3", i: <SecSm c="#a8a8a8" l="#eeeeee" />, cls: "w-[180px] pl-[10px]" },
  { t: "East", i: <ElevI c="#8f9499" f="#dcdcdc" />, cls: "w-[180px] pl-[10px]" },
];

export default function App() {
  return (
    <div className="w-[1920px] h-[1280px] overflow-hidden bg-[#cccccc] text-[#333333] text-[16px] leading-none font-['Open_Sans',sans-serif] flex flex-col">
      {/* title bar */}
      <div className="h-[42px] flex items-center shrink-0">
        <div className="ml-[10px]"><RLogo /></div>
        <div className="ml-[16px]"><OpenI /></div>
        <div className="ml-[13px]"><SaveI /></div>
        <div className="ml-[10px]"><SyncI /></div>
        <div className="ml-[8px]"><Caret /></div>
        <div className="ml-[11px]"><UndoI /></div>
        <div className="ml-[10px]"><Caret /></div>
        <div className="ml-[12px]"><RedoI /></div>
        <div className="ml-[11px]"><Caret c="#888" /></div>
        <div className="ml-[10px]"><PrintI /></div>
        <div className="ml-[10px]"><Vsep /></div>
        <div className="ml-[9px]"><MeasureI /></div>
        <div className="ml-[11px]"><Caret /></div>
        <div className="ml-[11px]"><AlignI /></div>
        <div className="ml-[12px]"><TagI /></div>
        <div className="ml-[14px]"><AI /></div>
        <div className="ml-[13px]"><Vsep /></div>
        <div className="ml-[9px]"><HouseSm /></div>
        <div className="ml-[11px]"><Caret /></div>
        <div className="ml-[12px]"><SecSm /></div>
        <div className="ml-[14px]"><ThinSm /></div>
        <div className="ml-[10px]"><Vsep /></div>
        <div className="ml-[11px]"><CloseInSm /></div>
        <div className="ml-[11px]"><SwitchSm /></div>
        <div className="ml-[5px]"><Caret /></div>
        <div className="ml-[15px]"><MoreI /></div>
        <div className="ml-[85px] w-[380px] shrink-0 text-[16.3px] -mt-[8px] whitespace-nowrap">COM APP PROJECT 1 - Elevation: North</div>
        <svg width="6" height="10" viewBox="0 0 6 10" className="block shrink-0"><path d="M0 0l6 5-6 5z" fill="#333" /></svg>
        <div className="ml-[7px] w-[253px] h-[31px] shrink-0 border-2 border-black bg-white flex items-center pl-[3px] italic text-[#8a8a8a] text-[14.5px] -mt-[3px]">Type a keyword or phrase</div>
        <div className="ml-[5px]"><BinocI /></div>
        <div className="ml-[12px]"><SatI /></div>
        <div className="ml-[13px]"><StarI /></div>
        <div className="ml-[13px]"><UserI /></div>
        <div className="ml-[6px] w-[120px] shrink-0">Sign In</div>
        <Caret />
        <div className="ml-[13px]"><CartI /></div>
        <div className="ml-[13px]"><Vsep /></div>
        <div className="ml-[12px]"><HelpI /></div>
        <div className="ml-[10px]"><Caret /></div>
        <div className="ml-[30px] mt-[16px] w-[13px] h-[3px] bg-[#222] shrink-0" />
        <div className="ml-[22px]"><RestoreI /></div>
        <div className="ml-[19px]"><XI /></div>
      </div>

      {/* ribbon tabs */}
      <div className="h-[29px] flex shrink-0 whitespace-nowrap">
        <div className="ml-[2px] w-[63px] bg-[#1f6dab] text-white flex items-center justify-center">File</div>
        <div className="ml-[18px] w-[118px] flex items-center">Architecture</div>
        <div className="w-[95px] flex items-center">Structure</div>
        <div className="w-[65px] flex items-center">Steel</div>
        <div className="w-[88px] flex items-center">Systems</div>
        <div className="w-[70px] flex items-center">Insert</div>
        <div className="w-[96px] flex items-center">Annotate</div>
        <div className="w-[87px] flex items-center">Analyze</div>
        <div className="w-[141px] flex items-center">{"Massing & Site"}</div>
        <div className="w-[101px] flex items-center">Collaborate</div>
        <div className="w-[61px] bg-[#eeeeee] flex items-center justify-center">View</div>
        <div className="ml-[15px] w-[89px] flex items-center">Manage</div>
        <div className="w-[87px] flex items-center">Add-Ins</div>
        <div className="w-[97px] flex items-center">Modify</div>
        <div className="flex items-center gap-[5px]">
          <div className="w-[20px] h-[12px] rounded-[3px] border-2 border-[#444] flex items-center justify-center">
            <svg width="8" height="5" viewBox="0 0 8 5" className="block"><path d="M4 0l4 5H0z" fill="#444" /></svg>
          </div>
          <Caret />
        </div>
      </div>

      {/* ribbon */}
      <div className="h-[135px] shrink-0 bg-[#eeeeee] border-b-2 border-[#d4d4d4] flex pl-[2px]">
        <Panel cls="w-[81px]" label={<span className="inline-flex items-center gap-[7px] -ml-[2px]">Select <Caret w={10} /></span>}>
          <div className="ml-[9px] mt-[4px] w-[62px] h-[100px] bg-gradient-to-b from-[#c8e1f7] to-[#a9cfee] border-2 border-[#1c6cbc] flex flex-col items-center">
            <div className="mt-[8px] h-[44px]"><CursorBig /></div>
            <div className="mt-[4px]">Modify</div>
          </div>
        </Panel>
        <Panel cls="w-[504px]" label="Graphics" launcher>
          <Big cls="ml-[14px] w-[80px]" icon={<ViewTplI />} lines={["View", "Templates"]} high />
          <div className="ml-[3px] mt-[79px]"><Caret /></div>
          <Big cls="ml-[4px] w-[74px]" icon={<VisI />} lines={["Visibility/", "Graphics"]} />
          <Big cls="ml-[3px] w-[50px]" icon={<FiltersI />} lines={["Filters"]} />
          <Big cls="ml-[7px] w-[44px]" icon={<ThinBig />} lines={["Thin", "Lines"]} />
          <div className="ml-[12px] mt-[5px]">
            <Row icon={<ShowI />} text="Show  Hidden Lines" />
            <Row icon={<RemoveI />} text="Remove  Hidden Lines" />
            <Row icon={<CutI />} text="Cut  Profile" />
          </div>
        </Panel>
        <Panel cls="w-[176px]" label="Presentation">
          <div className="ml-[11px] mt-[5px]">
            <Row icon={<TeapotI d />} text="Render" dim />
            <Row icon={<CloudI />} text="Render  in Cloud" />
            <Row icon={<GalleryI />} text="Render  Gallery" />
          </div>
        </Panel>
        <Panel cls="w-[465px]" label="Create">
          <Big cls="ml-[12px] w-[50px]" icon={<House3D />} lines={["3D", "View"]} />
          <div className="mt-[79px]"><Caret /></div>
          <Big cls="ml-[4px] w-[60px]" icon={<SectionBig />} lines={["Section"]} />
          <div className="ml-[9px] w-[70px] shrink-0 flex flex-col items-center">
            <div className="h-[58px] pt-[4px] flex items-center justify-center"><CalloutBig /></div>
            <div className="leading-[23px]">Callout</div>
            <div className="mt-[3px]"><Caret /></div>
          </div>
          <div className="ml-[14px] mt-[5px] w-[137px]">
            <div className="h-[33.5px] flex items-center">
              <PlanI />
              <span className="ml-[7px] whitespace-pre">Plan  Views</span>
              <span className="ml-[8px]"><Caret /></span>
            </div>
            <div className="h-[33.5px] flex items-center text-[#aeaeae]">
              <ElevI />
              <span className="ml-[7px]">Elevation</span>
              <span className="ml-[14px]"><Caret c="#999" /></span>
            </div>
          </div>
          <div className="ml-[6px] mt-[5px] w-[49px]">
            <div className="h-[33.5px] flex items-center"><PrintSheetI /></div>
            <div className="h-[33.5px] flex items-center gap-[3px]"><ScopeI /><Caret /></div>
            <div className="h-[33.5px] flex items-center gap-[3px]"><LegendI /><Caret /></div>
          </div>
          <div className="mt-[5px]">
            <div className="h-[33.5px] flex items-center gap-[8px]"><TableI /><Caret /></div>
            <div className="h-[33.5px] flex items-center"><GuideI /></div>
          </div>
        </Panel>
        <Panel cls="w-[158px]" label="Sheet Composition">
          <div className="ml-[22px] mt-[5px] grid grid-cols-[36px_35px_50px] auto-rows-[33.5px] items-center">
            <NewSheetI /><GhostSheetI /><RevI />
            <GhostMatchI /><AlignSheetI /><TagSheetI />
            <div /><DotsI /><div className="flex items-center gap-[3px]"><GhostViewI /><Caret c="#888" /></div>
          </div>
        </Panel>
        <Panel cls="w-[378px] border-r-0" label="Windows">
          <Big cls="ml-[11px] w-[80px]" icon={<SwitchBig />} lines={["Switch", "Windows"]} high />
          <div className="mt-[79px] -ml-[1px]"><Caret /></div>
          <Big cls="w-[64px]" icon={<CloseBig />} lines={["Close", "Inactive"]} />
          <Big cls="ml-[1px] w-[56px]" icon={<TabBig />} lines={["Tab", "Views"]} />
          <Big cls="w-[52px]" icon={<TileBig />} lines={["Tile", "Views"]} />
          <div className="ml-[7px] mt-[4px] w-px h-[100px] bg-[#cfcfcf] shrink-0" />
          <Big cls="ml-[14px] w-[80px]" icon={<UIBig />} lines={["User", "Interface"]} high />
          <div className="mt-[79px]"><Caret /></div>
        </Panel>
      </div>

      {/* options bar */}
      <div className="h-[36px] shrink-0 bg-[#f0f0f0]" />

      {/* main */}
      <div className="h-[1003px] shrink-0 flex">
        {/* left column */}
        <div className="w-[310px] shrink-0 flex flex-col pt-[3px]">
          <div className="h-[498px] bg-[#f0f0f0] flex flex-col">
            <div className="h-[28px] flex items-center pl-[6px] text-[#444] shrink-0">
              <span className="flex-1">Properties</span>
              <span className="mr-[8px]"><XI s={13} /></span>
            </div>
            <div className="mx-[4px] h-[96px] shrink-0 border border-[#dcdcdc] border-b-0 pt-[3px] pl-[3px] flex">
              <div className="w-[93px] h-[93px] border border-[#d8d8d8] border-b-[#cfcfcf] flex items-center justify-center">
                <ElevI c="#3c4450" f="#dfe2e6" s={42} />
              </div>
              <div className="ml-[5px] flex-1 flex flex-col justify-center leading-[23px] text-[#444] pt-[3px]">
                <div>Elevation</div>
                <div>Building Elevation</div>
              </div>
              <div className="mr-[3px] mt-[45px]"><Caret w={11} /></div>
            </div>
            <div className="h-[30px] shrink-0 flex items-center pl-[4px]">
              <div className="w-[209px] h-[27px] bg-[#d9d9d9] border border-[#c8c8c8] flex items-center pl-[1px] pr-[7px] justify-between text-[#222]">
                <span>Elevation: North</span>
                <Chev d="d" c="#555" />
              </div>
              <div className="ml-[4px] w-[12px] h-[12px] shrink-0">
                <svg width="12" height="12" viewBox="0 0 12 12" className="block"><path d="M.5.5h4.500v5H.5zM7 .5h4.500v5H7zM.5 7h4.500v4.500H.5z" fill="#eee" stroke="#666" /><rect x="7" y="7" width="4.500" height="4.500" fill="#7fb0e0" stroke="#5577a0" /></svg>
              </div>
              <span className="ml-[4px] whitespace-nowrap -mt-[1px] text-[#222]">Edit Type</span>
            </div>
            <div className="flex h-[306px] shrink-0">
              <div className="w-[279px] ml-[3px] flex flex-col overflow-hidden">
                <div className="h-[26px] shrink-0 bg-[#dcdcdc] pl-[1px] pr-[4px] flex justify-between items-center text-[#333]">
                  <span>Graphics</span>
                  <svg width="7" height="9" viewBox="0 0 7 9" className="block -mt-[14px]"><path d="M1 4l2.500-2.500L6 4M1 8l2.500-2.500L6 8" fill="none" stroke="#333" /></svg>
                </div>
                {props.map((p) => (
                  <div key={p.a} className="h-[26.67px] shrink-0 flex bg-white border-b border-dotted border-[#bcbcbc]">
                    <div className={`w-[131px] shrink-0 border-r border-dotted border-[#bcbcbc] pl-[12px] flex items-center whitespace-nowrap ${p.k === "dim" ? "text-[#808080]" : "text-[#222]"}`}>{p.k === "dim" ? <span className="flex-1 flex justify-between pr-[1px]"><span>{p.a}</span><span>{p.b}</span></span> : p.a}</div>
                    <div className="w-[132px] shrink-0 border-r border-dotted border-[#bcbcbc] flex items-center text-[#222]">
                      {p.k === "input" && <div className="w-full h-full border border-[#222] pl-[6px] flex items-center">{p.b}</div>}
                      {p.k === "dim" && <span className="pl-[2px] text-[#808080]">100</span>}
                      {p.k === "btn" && <div className="ml-[1px] w-[130px] h-[25px] bg-[#d9d9d9] border border-[#bcbcbc] flex items-center justify-center">{p.b}</div>}
                      {p.k === "ind" && <span className="pl-[7px]">{p.b}</span>}
                      {p.k === undefined && <span className="pl-[2px]">{p.b}</span>}
                    </div>
                  </div>
                ))}
              </div>
              <div className="w-[24px] flex flex-col items-center pt-[7px] pb-[7px]">
                <Chev d="u" />
                <div className="mt-[6px] w-[22px] h-[87px] bg-[#cdcdcd]" />
                <div className="flex-1" />
                <Chev d="d" />
              </div>
            </div>
            <div className="flex-1 flex items-center pl-[5px] pr-[5px]">
              <span className="text-[#0a66c2] underline flex-1">Properties help</span>
              <div className="w-[104px] h-[30px] bg-[#cccccc] text-[#8a8a8a] flex items-center justify-center">Apply</div>
            </div>
          </div>
          <div className="h-[2px] shrink-0" />
          <div className="flex-1 bg-[#f0f0f0] flex flex-col min-h-0">
            <div className="h-[29px] shrink-0 flex items-center pl-[6px] text-[#444]">
              <span className="flex-1 whitespace-nowrap">Project Browser - COM APP PROJE...</span>
              <span className="mr-[8px]"><XI s={13} /></span>
            </div>
            <div className="h-[445px] shrink-0 flex">
              <div className="w-[281px] ml-[3px] bg-white overflow-hidden">
                {tree.map((r) => (
                  <div key={r.t} className="h-[23.9px] flex items-center whitespace-nowrap text-[#222]">
                    <Guide k={r.k} />
                    {r.b ? <span className="-ml-[2px] px-[2px] h-[22px] flex items-center bg-[#e6e6e6] font-bold">{r.t}</span> : <span>{r.t}</span>}
                  </div>
                ))}
              </div>
              <div className="w-[23px] flex flex-col items-center pt-[7px] pb-[7px]">
                <Chev d="u" />
                <div className="mt-[135px] w-[22px] h-[179px] bg-[#cdcdcd]" />
                <div className="flex-1" />
                <Chev d="d" />
              </div>
            </div>
            <div className="h-[23px] shrink-0 flex items-center pl-[10px]">
              <Chev d="l" />
              <div className="ml-[7px] w-[226px] h-[23px] bg-[#cdcdcd]" />
              <div className="ml-[14px]"><Chev d="r" /></div>
            </div>
          </div>
          <div className="h-[3px] shrink-0" />
        </div>

        {/* right column */}
        <div className="ml-[2px] flex-1 flex flex-col pt-[1px] bg-[#cccccc]">
          <div className="h-[30px] shrink-0 flex whitespace-nowrap text-[#444]">
            {viewTabs.map((t) => (
              <div key={t.t} className={`${t.cls} shrink-0 flex items-center`}>
                <div className="w-[22px] flex justify-center shrink-0">{t.i}</div>
                <span className="ml-[9px] mt-[2px]">{t.t}</span>
              </div>
            ))}
            <div className="w-[180px] shrink-0 mt-[2px] bg-white flex items-center pl-[8px] text-[#222]">
              <ElevI c="#3c4450" f="#dfe2e6" s={24} />
              <span className="ml-[8px] font-bold flex-1">North</span>
              <span className="mr-[8px]"><XI s={13} w={2.5} /></span>
            </div>
            <div className="ml-auto mr-[8px] self-center"><MoreI /></div>
          </div>
          <div className="h-[945px] shrink-0 flex">
            <div className="flex-1 bg-white relative">
              <Drawing />
              <div className="absolute left-[912px] top-[158px] w-[389px] h-[48px] bg-white border border-[#9a9a9a] shadow-[2px_2px_0_#bcbcbc] pl-[3px] pt-[1px] text-[16px] leading-[22px] text-[#444] whitespace-nowrap">
                Click to select, TAB for alternates, CTRL adds, SHIFT<br />unselects.
              </div>
              <NavBar />
            </div>
            <div className="w-[26px] shrink-0 bg-[#f0f0f0] flex flex-col items-center pt-[11px] pb-[8px]">
              <Chev d="u" />
              <div className="mt-[441px] w-[24px] h-[23px] bg-[#cdcdcd]" />
              <div className="flex-1" />
              <Chev d="d" />
            </div>
          </div>
          <div className="h-[24px] shrink-0 bg-[#f0f0f0] flex items-center">
            <div className="ml-[38px] w-[77px] shrink-0 text-[14.5px] text-[#222]">1 : 100</div>
            <DetailI />
            <div className="ml-[8px]"><CubeI /></div>
            <div className="ml-[6px]"><SunI /></div>
            <div className="ml-[10px]"><ShadowI /></div>
            <div className="ml-[7px]"><CropI kind={0} /></div>
            <div className="ml-[8px]"><CropI kind={1} /></div>
            <div className="ml-[7px]"><GlassesI /></div>
            <div className="ml-[12px]"><BulbI /></div>
            <div className="ml-[13px]"><CamI /></div>
            <div className="ml-[8px]"><TempI /></div>
            <div className="ml-[6px]"><LockDimI /></div>
            <div className="ml-[12px]"><Chev d="l" /></div>
            <div className="ml-[7px] w-px h-[24px] bg-[#dcdcdc]" />
            <div className="ml-[533px] w-[23px] h-[24px] bg-[#cdcdcd]" />
            <div className="ml-[548px]"><Chev d="r" /></div>
            <div className="ml-[17px]">
              <svg width="10" height="10" viewBox="0 0 10 10" className="block"><path d="M8 2h1M8 5h1M8 8h1M5 5h1M5 8h1M2 8h1" stroke="#aaa" strokeWidth="1.500" /></svg>
            </div>
          </div>
          <div className="h-[3px] shrink-0" />
        </div>
      </div>

      {/* status bar */}
      <div className="h-[35px] shrink-0 flex items-center whitespace-nowrap">
        <div className="ml-[2px] w-[640px] shrink-0 text-[#222] text-[16px] -mt-[2px]">Click to select, TAB for alternates, CTRL adds, SHIFT unselects.</div>
        <div className="ml-[2px]"><WorkI /></div>
        <div className="ml-[8px] w-[285px] h-[24px] bg-white flex items-center justify-end pr-[6px] -mt-[8px] shrink-0"><Chev d="d" c="#999" /></div>
        <div className="ml-[7px]"><DesignI /></div>
        <div className="ml-[8px] w-[13px] shrink-0 text-[15px] mt-[4px]">:0</div>
        <div className="ml-[11px]"><LegendI /></div>
        <div className="ml-[9px]"><ModelI /></div>
        <div className="ml-[8px] w-[285px] h-[24px] bg-white flex items-center justify-between pl-[2px] pr-[6px] -mt-[8px] shrink-0 text-[#999]">
          <span>Main Model</span>
          <Chev d="d" c="#999" />
        </div>
        <div className="ml-[305px]"><LinkSel /></div>
        <div className="ml-[8px]"><UnderlaySel /></div>
        <div className="ml-[7px]"><PinSel /></div>
        <div className="ml-[8px]"><FaceSel /></div>
        <div className="ml-[6px]"><DragSel /></div>
        <div className="ml-[10px]"><Spin /></div>
        <div className="ml-[8px]"><FunnelI /></div>
        <div className="ml-[3px] text-[15px] mt-[6px]">:0</div>
      </div>
    </div>
  );
}
